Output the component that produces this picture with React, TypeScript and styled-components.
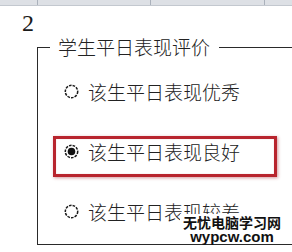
import React from "react";
import styled, { createGlobalStyle } from "styled-components";

const GlobalStyle = createGlobalStyle`
  html, body {
    margin: 0;
    padding: 0;
    background: #ffffff;
  }
  body {
    width: 292px;
    height: 252px;
    overflow: hidden;
    font-family: "Noto Sans CJK SC", "Noto Sans", sans-serif;
    color: #1e1e1e;
  }
`;

const Page = styled.div`
  position: relative;
  width: 292px;
  height: 252px;
  overflow: hidden;
`;

const HeaderStrip = styled.div`
  display: grid;
  grid-template-columns: 38px 113px 114px 1fr;
  height: 5px;
  background: #dde0e5;
  border-bottom: 1px solid #c3c8cf;
`;

const HeaderCell = styled.div`
  border-right: 1px solid #aab1bb;
  &:last-child {
    border-right: none;
  }
`;

const CellNumber = styled.div`
  margin: 5px 0 0 22px;
  font-family: "Liberation Serif", "Times New Roman", serif;
  font-size: 24px;
  line-height: 24px;
  height: 26px;
  color: #1a1a1a;
`;

const GroupBox = styled.fieldset`
  box-sizing: border-box;
  margin: 0 0 0 37px;
  padding: 0 0 0 12px;
  width: 280px;
  height: 208px;
  border: 1px solid #2a2a2a;
  border-right: none;
  min-width: 0;
`;

const GroupTitle = styled.legend`
  padding: 0 9px 0 8px;
  font-size: 19px;
  line-height: 20px;
  font-weight: 300;
  color: #222;
`;

const OptionList = styled.div`
  display: flex;
  flex-direction: column;
  gap: 19px;
  margin: 0 0 0 3px;
  padding-top: 19px;
`;

const Option = styled.label<{ $highlight?: boolean }>`
  box-sizing: border-box;
  display: flex;
  align-items: center;
  gap: 9px;
  width: 224px;
  height: 41px;
  padding: 3px 0 13px 8px;
  border: 3px solid ${(p) => (p.$highlight ? "#b8252e" : "transparent")};
  box-shadow: ${(p) =>
    p.$highlight ? "1px 1px 3px rgba(160, 30, 40, 0.45), inset 0 0 1px rgba(160,30,40,0.4)" : "none"};
`;

const OptionText = styled.span`
  font-size: 19px;
  line-height: 19px;
  font-weight: 300;
  white-space: nowrap;
  color: #222;
`;

const RadioMark = styled.svg`
  display: block;
  flex: 0 0 15px;
  width: 15px;
  height: 15px;
`;

const Watermark = styled.div`
  position: absolute;
  right: 8px;
  bottom: 9px;
  display: flex;
  flex-direction: column;
  align-items: center;
  width: 104px;
  padding-top: 1px;
  background: #ffffff;
  color: #111;
`;

const WatermarkCn = styled.div`
  font-family: "Noto Sans CJK SC", sans-serif;
  font-weight: 700;
  font-size: 14px;
  line-height: 15px;
`;

const WatermarkEn = styled.div`
  font-family: "Liberation Sans", Arial, sans-serif;
  font-weight: 700;
  font-size: 15px;
  line-height: 13px;
  height: 13px;
`;

function Radio({ checked }: { checked?: boolean }) {
  return (
    <RadioMark width="15" height="15" viewBox="0 0 15 15">
      <circle
        cx="7.5"
        cy="7.5"
        r="6.2"
        fill="#fff"
        stroke="#1a1a1a"
        strokeWidth="1.5"
        strokeDasharray="2.6 1.1"
      />
      {checked && <circle cx="7.5" cy="7.5" r="3.8" fill="#111" />}
    </RadioMark>
  );
}

const options = [
  { text: "该生平日表现优秀", checked: false },
  { text: "该生平日表现良好", checked: true },
  { text: "该生平日表现较差", checked: false },
];

export default function App() {
  return (
    <Page>
      <GlobalStyle />
      <HeaderStrip>
        <HeaderCell />
        <HeaderCell />
        <HeaderCell />
        <HeaderCell />
      </HeaderStrip>
      <CellNumber>2</CellNumber>
      <GroupBox>
        <GroupTitle>学生平日表现评价</GroupTitle>
        <OptionList>
          {options.map((o) => (
            <Option key={o.text} $highlight={o.checked}>
              <Radio checked={o.checked} />
              <OptionText>{o.text}</OptionText>
            </Option>
          ))}
        </OptionList>
      </GroupBox>
      <Watermark>
        <WatermarkCn>无忧电脑学习网</WatermarkCn>
        <WatermarkEn>wypcw.com</WatermarkEn>
      </Watermark>
    </Page>
  );
}
